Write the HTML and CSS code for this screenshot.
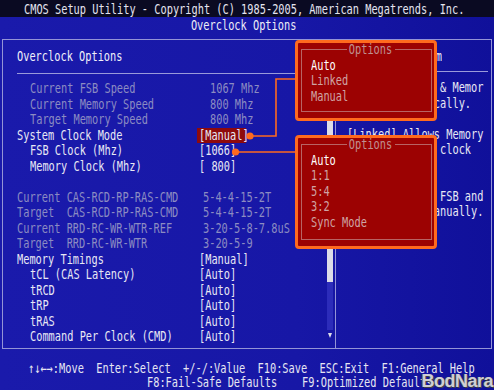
FILE: index.html
```html
<!DOCTYPE html>
<html>
<head>
<meta charset="utf-8">
<title>CMOS Setup Utility - Overclock Options</title>
<link rel="stylesheet" href="styles.css">
</head>
<body>
<div class="screen">
  <header class="top"><span class="t c">CMOS Setup Utility - Copyright (C) 1985-2005, American Megatrends, Inc.</span></header>
  <div class="sub"><span class="t c">Overclock Options</span></div>

  <main class="frame">
    <section class="left">
      <div class="lmain">
        <h1 class="head"><span class="t">Overclock Options</span></h1>
        <hr class="rule">
        <div class="rows">
          <div class="row dim in"><span class="lab"><span class="t">Current FSB Speed</span></span><span class="val spd"><span class="t">1067 Mhz</span></span></div>
          <div class="row dim in"><span class="lab"><span class="t">Current Memory Speed</span></span><span class="val spd"><span class="t">800 Mhz</span></span></div>
          <div class="row dim in"><span class="lab"><span class="t">Target Memory Speed</span></span><span class="val spd"><span class="t">800 Mhz</span></span></div>
          <div class="row"><span class="lab"><span class="t">System Clock Mode</span></span><span class="val"><span class="hl"><span class="t">[Manual]</span></span></span></div>
          <div class="row in"><span class="lab"><span class="t">FSB Clock (Mhz)</span></span><span class="val"><span class="t">[1066]</span></span></div>
          <div class="row in"><span class="lab"><span class="t">Memory Clock (Mhz)</span></span><span class="val"><span class="t">[ 800]</span></span></div>
          <div class="row"></div>
          <div class="row dim"><span class="lab"><span class="t">Current CAS-RCD-RP-RAS-CMD</span></span><span class="val tim"><span class="t">5-4-4-15-2T</span></span></div>
          <div class="row dim"><span class="lab"><span class="t">Target  CAS-RCD-RP-RAS-CMD</span></span><span class="val tim"><span class="t">5-4-4-15-2T</span></span></div>
          <div class="row dim"><span class="lab"><span class="t">Current RRD-RC-WR-WTR-REF</span></span><span class="val tim"><span class="t">3-20-5-8-7.8uS</span></span></div>
          <div class="row dim"><span class="lab"><span class="t">Target  RRD-RC-WR-WTR</span></span><span class="val tim"><span class="t">3-20-5-9</span></span></div>
          <div class="row"><span class="lab"><span class="t">Memory Timings</span></span><span class="val"><span class="t">[Manual]</span></span></div>
          <div class="row in"><span class="lab"><span class="t">tCL (CAS Latency)</span></span><span class="val"><span class="t">[Auto]</span></span></div>
          <div class="row in"><span class="lab"><span class="t">tRCD</span></span><span class="val"><span class="t">[Auto]</span></span></div>
          <div class="row in"><span class="lab"><span class="t">tRP</span></span><span class="val"><span class="t">[Auto]</span></span></div>
          <div class="row in"><span class="lab"><span class="t">tRAS</span></span><span class="val"><span class="t">[Auto]</span></span></div>
          <div class="row in"><span class="lab"><span class="t">Command Per Clock (CMD)</span></span><span class="val"><span class="t">[Auto]</span></span></div>
        </div>
      </div>
      <div class="scroll">
        <div class="arrow"><i class="tri up"></i></div>
        <div class="thumb"></div>
        <div class="track"></div>
        <div class="arrow dn"><i class="tri down"></i></div>
      </div>
    </section>

    <aside class="right">
      <h2 class="rhead"><span class="t c">Help Item</span></h2>
      <hr class="rrule">
      <div class="help">
        <div class="hline"><span class="t">[Auto] Set FSB &amp; Memor</span></div>
        <div class="hline"><span class="t">clock automatically.</span></div>
        <div class="hline"></div>
        <div class="hline"><span class="t">[Linked] Allows Memory</span></div>
        <div class="hline"><span class="t">to sync to CPU clock</span></div>
        <div class="hline"><span class="t">speed.</span></div>
        <div class="hline"></div>
        <div class="hline"><span class="t">[Manual] Allow FSB and</span></div>
        <div class="hline"><span class="t">Memory to be manually.</span></div>
      </div>
    </aside>
  </main>

  <footer class="foot">
    <div class="f1"><span class="t">↑↓←→:Move  Enter:Select  +/-/:Value  F10:Save  ESC:Exit  F1:General Help</span></div>
    <div class="f2"><span class="t">F8:Fail-Safe Defaults    F9:Optimized Defaults</span></div>
  </footer>

  <svg class="wires" width="494" height="390" viewBox="0 0 494 390">
    <path d="M250 136 H276 V79 H296" fill="none" stroke="#ff6a1e" stroke-width="1.6"/>
    <path d="M235 152 H296" fill="none" stroke="#ff6a1e" stroke-width="1.6"/>
    <circle cx="250" cy="136" r="3.6" fill="#ff6a1e"/>
    <circle cx="235.5" cy="152" r="3.6" fill="#ff6a1e"/>
  </svg>

  <div class="popup p1">
    <fieldset class="box">
      <legend class="lg"><span class="t c">Options</span></legend>
      <div class="opt sel"><span class="t">Auto</span></div>
      <div class="opt"><span class="t">Linked</span></div>
      <div class="opt"><span class="t">Manual</span></div>
    </fieldset>
  </div>

  <div class="popup p2">
    <fieldset class="box">
      <legend class="lg"><span class="t c">Options</span></legend>
      <div class="opt sel"><span class="t">Auto</span></div>
      <div class="opt"><span class="t">1:1</span></div>
      <div class="opt"><span class="t">5:4</span></div>
      <div class="opt"><span class="t">3:2</span></div>
      <div class="opt"><span class="t">Sync Mode</span></div>
    </fieldset>
  </div>

  <div class="mark">BodNara</div>
</div>
</body>
</html>
```

FILE: styles.css
```css
* { box-sizing: border-box; }
html, body { margin: 0; padding: 0; }
body {
  background: #1616a4;
  font-family: "DejaVu Sans Mono", "Liberation Mono", monospace;
  font-size: 14px;
  color: #e8e8f4;
}
.screen {
  position: relative;
  width: 494px;
  height: 390px;
  overflow: hidden;
  background: linear-gradient(90deg, #1a1aab 0%, #1717a6 60%, #10109a 100%);
}

/* narrow, tall BIOS-style glyphs */
.t {
  display: inline-block;
  white-space: pre;
  transform: scaleX(0.736);
  transform-origin: 0 50%;
}
.t.c { transform-origin: 50% 50%; }

.top {
  height: 17px;
  padding: 2px 6px 0 0;
  line-height: 15px;
  background: #0a0a22;
  display: flex;
  justify-content: center;
  color: #e4e4f0;
}
.sub {
  height: 17px;
  line-height: 17px;
  padding-right: 6px;
  display: flex;
  justify-content: center;
  color: #ececf6;
}

.frame {
  margin: 5px 2px 0;
  height: 310px;
  border: 1px solid #9494d6;
  display: flex;
}

.left {
  flex: none;
  width: 332px;
  display: flex;
  padding: 9px 0 0 14px;
}
.lmain { flex: 1; min-width: 0; }
.head {
  margin: 0;
  font: inherit;
  line-height: 15.5px;
  color: #f0f0fa;
}
.rule {
  margin: 8px 0 0;
  border: 0;
  height: 1px;
  background: #9a9ada;
}
.rows { margin-top: 7.75px; }
.row {
  display: grid;
  grid-template-columns: 182px 1fr;
  height: 15.5px;
  line-height: 15.5px;
}
.dim { color: #8c8cc2; }
.in .lab { padding-left: 13px; }
.tim { padding-left: 4px; }
.spd { padding-left: 11px; }
.hl {
  display: inline-block;
  width: 49px;
  height: 15px;
  margin-left: -2px;
  padding-left: 2px;
  background: #8e0a0c;
}

.scroll {
  width: 6px;
  margin: 29px 2px 7px 1px;
  display: flex;
  flex-direction: column;
}
.arrow {
  height: 8px;
  display: flex;
  align-items: center;
  justify-content: center;
}
.arrow.dn { height: 11px; }
.tri {
  width: 0;
  height: 0;
  border-left: 2.5px solid transparent;
  border-right: 2.5px solid transparent;
}
.tri.up { border-bottom: 5px solid #dcdce8; }
.tri.down { border-top: 5px solid #dcdce8; }
.thumb { height: 196px; background: #dcdce8; }
.track { flex: 1; background: #2c2cba; }

.right {
  flex: 1;
  min-width: 0;
  border-left: 1px solid #9494d6;
  padding-top: 9px;
}
.rhead {
  margin: 0;
  font: inherit;
  line-height: 15.5px;
  display: flex;
  justify-content: center;
  color: #f0f0fa;
}
.rrule {
  margin: 6.5px 3px 0 4px;
  border: 0;
  height: 1px;
  background: #9a9ada;
}
.help {
  margin-top: 8.25px;
  padding-left: 10.5px;
}
.hline { height: 15.5px; line-height: 15.5px; }

.foot {
  padding-top: 12px;
  line-height: 14px;
  color: #e6e6f2;
}
.f1 { padding-left: 28px; height: 14px; }
.f2 { padding-left: 147px; height: 14px; }

.wires {
  position: absolute;
  left: 0;
  top: 0;
  pointer-events: none;
}

.popup {
  position: absolute;
  left: 295px;
  width: 142px;
  border: 3px solid #ff6a1e;
  border-radius: 4px;
  background: #9c0202;
  padding: 0 2px 6px 3px;
  display: flex;
  flex-direction: column;
}
.p1 { top: 40px; height: 81px; }
.p2 { top: 135px; height: 114px; }
.box {
  flex: 1;
  margin: 0;
  min-width: 0;
  border: 1px solid #b86464;
  padding: 1.5px 0 0 9px;
}
.lg {
  margin: 0 auto;
  padding: 0 1px;
  line-height: 13px;
  color: #c09090;
}
.lg .t { margin: 0 -6.5px; }
.opt {
  height: 15.5px;
  line-height: 15.5px;
  color: #cfa4a4;
}
.opt.sel { color: #ffffff; }

.mark {
  position: absolute;
  right: 1px;
  bottom: -2px;
  font-family: "Liberation Sans", Arial, sans-serif;
  font-weight: bold;
  font-size: 18px;
  letter-spacing: -0.5px;
  color: #cfcfd4;
  text-shadow: 1px 1px 0 #404048, -1px 0 0 #505058;
}
```
